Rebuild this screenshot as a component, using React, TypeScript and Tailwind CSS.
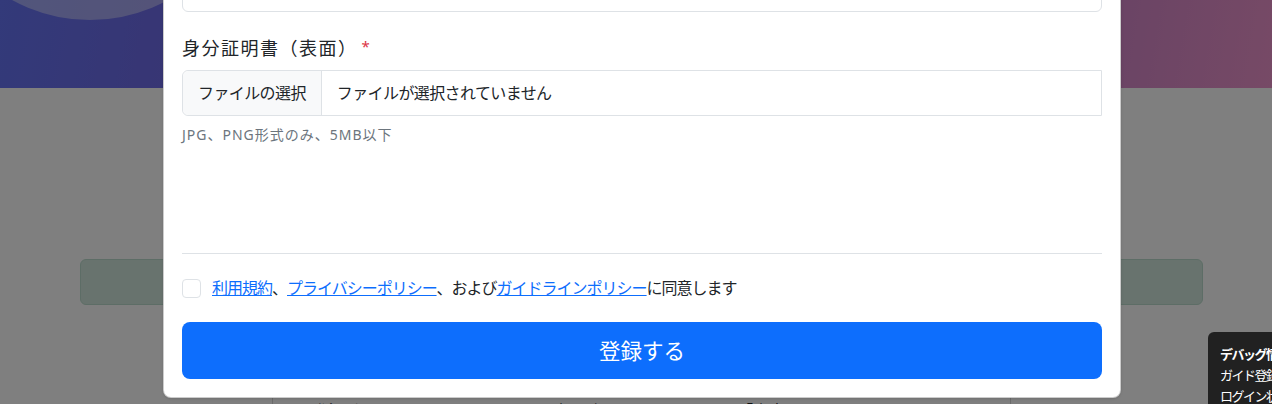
import React from "react";

export default function App() {
  const font = { fontFamily: '"Noto Sans", "Noto Sans CJK JP", sans-serif' };
  return (
    <div
      className="relative w-[1272px] h-[404px] overflow-hidden bg-white text-[#212529]"
      style={font}
    >
      {/* page behind */}
      <div className="relative h-[88px] overflow-hidden bg-[linear-gradient(100deg,#6674f4_0%,#7468e4_20%,#a070c8_60%,#ee94cc_100%)]">
        <div className="absolute left-[-72px] top-[-304px] w-[324px] h-[324px] rounded-full bg-white/40" />
      </div>
      <div className="ml-[80px] mt-[171px] w-[1123px] h-[46px] rounded-md border border-[#badbcc] bg-[#d1e7dd]" />
      <div className="ml-[272px] mt-[77px] w-[739px] h-[80px] border border-[#d6d6d6] bg-white px-4 pt-4">
        <div className="flex text-[16px] leading-[24px] text-[#212529]">
          <span className="ml-[6px]">【登録ガイド】</span>
          <span className="ml-[130px]">・本人確認</span>
          <span className="ml-[120px]">「審査」</span>
        </div>
      </div>

      {/* backdrop */}
      <div className="absolute inset-0 bg-black/50" />

      {/* modal */}
      <div className="absolute left-[163px] bottom-[6px] w-[958px] rounded-lg border border-black/20 bg-white px-[18px] pb-[18px] shadow-sm">
        <div className="h-[46px] rounded-md border border-[#dee2e6] bg-white" />

        <label className="mt-[23px] mb-2 flex items-start text-[18px] leading-[27px] text-[#212529]">
          <span className="tracking-[1.5px]">身分証明書（表面）</span>
          <span className="ml-[4px] text-[15px] leading-[22px] text-[#dc3545]">*</span>
        </label>

        <div className="flex h-[46px] rounded-l-md border border-[#dee2e6] text-[16px] tracking-[-0.6px]">
          <div className="flex items-center rounded-l-md border-r border-[#dee2e6] bg-[#f8f9fa] px-[15px]">
            ファイルの選択
          </div>
          <div className="flex items-center pl-[15px]">ファイルが選択されていません</div>
        </div>
        <div className="mt-2 text-[14px] leading-[21px] tracking-[1px] text-[#6c757d]">
          JPG、PNG形式のみ、5MB以下
        </div>

        <div className="h-[108px]" />
        <div className="border-t border-[#dee2e6]" />

        <div className="mt-[22px] flex h-[24px] items-center text-[16px]">
          <span className="h-[19px] w-[19px] shrink-0 rounded-[4px] border border-[#dee2e6] bg-white" />
          <span className="ml-[11px] tracking-[-1px]">
            <a className="text-[#0d6efd] underline">利用規約</a>、
            <a className="text-[#0d6efd] underline">プライバシーポリシー</a>、および
            <a className="text-[#0d6efd] underline">ガイドラインポリシー</a>に同意します
          </span>
        </div>

        <button className="mt-[22px] flex h-[57px] w-full items-center justify-center rounded-lg bg-[#0d6efd] pt-[2px] text-[21.5px] text-white">
          登録する
        </button>
      </div>

      {/* debug panel */}
      <div className="absolute left-[1208px] top-[332px] w-[240px] rounded-md bg-[#212121] px-3 pt-[12px] pb-3 text-[13px] leading-[21px] tracking-[-1.5px] text-white">
        <div className="font-bold">デバッグ情報</div>
        <div>ガイド登録フォーム</div>
        <div>ログイン状態: 未ログイン</div>
      </div>
    </div>
  );
}
